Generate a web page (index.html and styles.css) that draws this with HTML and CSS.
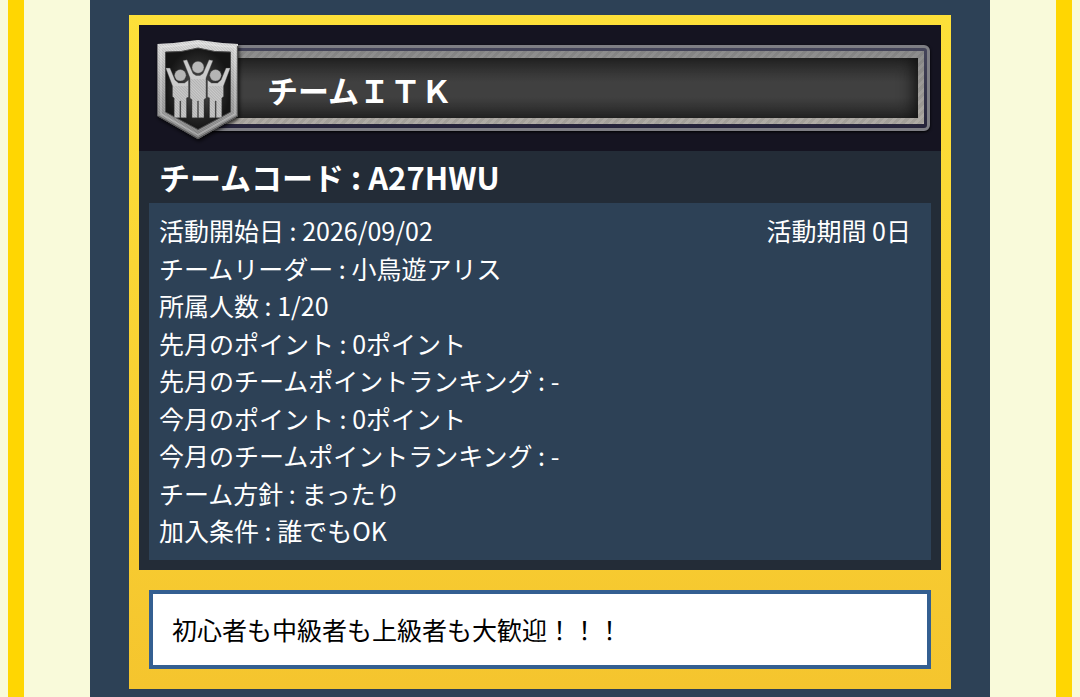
FILE: index.html
```html
<!DOCTYPE html>
<html lang="ja">
<head>
<meta charset="utf-8">
<meta name="viewport" content="width=device-width, initial-scale=1">
<title>チームＩＴＫ</title>
<link rel="stylesheet" href="styles.css">
</head>
<body>
<div class="frame">
  <main class="column">
    <article class="card">
      <section class="team">
        <header class="team-header">
          <div class="plate">
            <div class="plate-rim">
              <h1 class="team-name">チームＩＴＫ</h1>
            </div>
          </div>
          <svg class="emblem" viewBox="0 0 90 108" aria-hidden="true">
            <defs>
              <linearGradient id="metal" x1="0" y1="0" x2="0" y2="1">
                <stop offset="0" stop-color="#e6e6e6"/>
                <stop offset=".4" stop-color="#bcbcbc"/>
                <stop offset="1" stop-color="#8c8c8c"/>
              </linearGradient>
              <radialGradient id="well">
                <stop offset="0" stop-color="#505050"/>
                <stop offset="1" stop-color="#151515"/>
              </radialGradient>
              <pattern id="hatch" width="2" height="2" patternUnits="userSpaceOnUse" patternTransform="rotate(-45)">
                <rect width="1" height="2" fill="#000" opacity=".12"/>
              </pattern>
              <filter id="shade" x="-20%" y="-20%" width="140%" height="140%">
                <feDropShadow dx="1" dy="2" stdDeviation="2" flood-color="#000" flood-opacity=".9"/>
              </filter>
            </defs>
            <path d="M3.500 7 20 6 44 3l24 3 16 1v72L44 102 3.500 79z" fill="url(#metal)" filter="url(#shade)"/>
            <path d="M3.500 7 20 6 44 3l24 3 16 1v72L44 102 3.500 79z" fill="url(#hatch)"/>
            <path d="M7 77V10l14-1 23-3 23 3 14 1v67L44 98z" fill="none" stroke="#fff" stroke-width="1.500" opacity=".28"/>
            <path d="M83.500 9v70L44 101.500 4 79" fill="none" stroke="#555" stroke-width="1.200"/>
            <path d="M11.500 15 27 14.500 44 11l17 3.500 15.500.5v60L44 92.500 11.500 75z" fill="url(#well)" stroke="#4a4a4a" stroke-width="1"/>
            <g stroke="#444" stroke-width=".4" fill="#cbcbcb">
              <path d="M11.700 31l4.300 0 5 12 3.500 3h6l4-3v17l-2 1v19.800h-5.800V64h-.8v16.800H20.200V61l-1.700-1.500V49z"/>
              <path d="M76.300 31l-4.300 0-5 12-3.500 3h-6l-4-3v17l2 1v19.800h5.800V64h.8v16.800h5.700V61l1.700-1.500V49z"/>
              <path d="M29 23.500l4-.7 6 13.700 3 2h4l3-2 6-13.700 4 .7-7 17.500v20l-2 1.500v18.300h-5.600V64h-.8v16.800H38V62.500L36 61V41z"/>
              <circle cx="26.300" cy="38.300" r="5.800" fill="#b5b5b5"/>
              <circle cx="61.500" cy="38.300" r="5.800" fill="#b5b5b5"/>
              <circle cx="44" cy="30.300" r="6" fill="#b9b9b9"/>
            </g>
            <path d="M19 49h15v32H20V61h-1zM54 49h15v12h-1v20H54zM36 42h16v39H38V61h-2z" fill="url(#hatch)"/>
          </svg>
        </header>
        <h2 class="team-code">チームコード : A27HWU</h2>
        <div class="info">
          <p class="split"><span>活動開始日 : 2026/09/02</span><span>活動期間 0日</span></p>
          <p>チームリーダー : 小鳥遊アリス</p>
          <p>所属人数 : 1/20</p>
          <p>先月のポイント : 0ポイント</p>
          <p>先月のチームポイントランキング : -</p>
          <p>今月のポイント : 0ポイント</p>
          <p>今月のチームポイントランキング : -</p>
          <p>チーム方針 : まったり</p>
          <p>加入条件 : 誰でもOK</p>
        </div>
      </section>
      <p class="message">初心者も中級者も上級者も大歓迎！！！</p>
    </article>
  </main>
</div>
</body>
</html>
```
FILE: styles.css
```css
* {
  box-sizing: border-box;
}

body {
  margin: 0;
  padding: 0 8px;
  background: #f9fada;
  font-family: "Noto Sans CJK JP", sans-serif;
  font-size: 25px;
  line-height: 1.5;
}

h1, h2, p {
  margin: 0;
}

.frame {
  min-height: 100vh;
  padding: 0 66px;
  border: solid #ffd602;
  border-width: 0 16px;
}

.column {
  min-height: 100vh;
  padding: 15px 39px 8px;
  background: #2d4156;
}

.card {
  padding: 10px 10px 20px;
  background: linear-gradient(#fde039, #f5c52e);
}

.team {
  padding-bottom: 10px;
  background: #232c37;
}

.team-header {
  position: relative;
  padding: 20px 11px 20px 60px;
  background: #151421;
}

.plate {
  padding: 3px 3px 4px;
  border: 3px solid #7e7e84;
  border-radius: 6px;
  background: linear-gradient(#45455a, #25233a);
  box-shadow: 0 1px 3px #000;
}

.plate-rim {
  padding: 7px 6px 6px;
  background:
    repeating-linear-gradient(135deg, #0000 0 3px, #0001 3px 6px),
    linear-gradient(#8c8c8c, #b0aca6);
}

.team-name {
  padding: 7px 0 4px 56px;
  background: linear-gradient(#262626, #404040 40%, #404040 65%, #282828);
  box-shadow: inset -8px 0 16px -4px #111;
  color: #fff;
  font-size: 31px;
  line-height: 49px;
}

.emblem {
  position: absolute;
  top: 12px;
  left: 15px;
  width: 90px;
  height: 108px;
}

.team-code {
  padding: 2px 20px 3px;
  color: #fff;
  font-size: 31px;
  line-height: 47px;
}

.info {
  margin: 0 10px;
  padding: 9px 10px 10px;
  background: #2d4156;
  color: #fff;
}

.split {
  display: flex;
  flex-wrap: wrap;
  justify-content: space-between;
  padding-right: 10px;
}

.message {
  margin: 20px 10px 0;
  padding: 17px 19px;
  border: 4px solid #345f91;
  background: #fff;
  color: #000;
}
```
